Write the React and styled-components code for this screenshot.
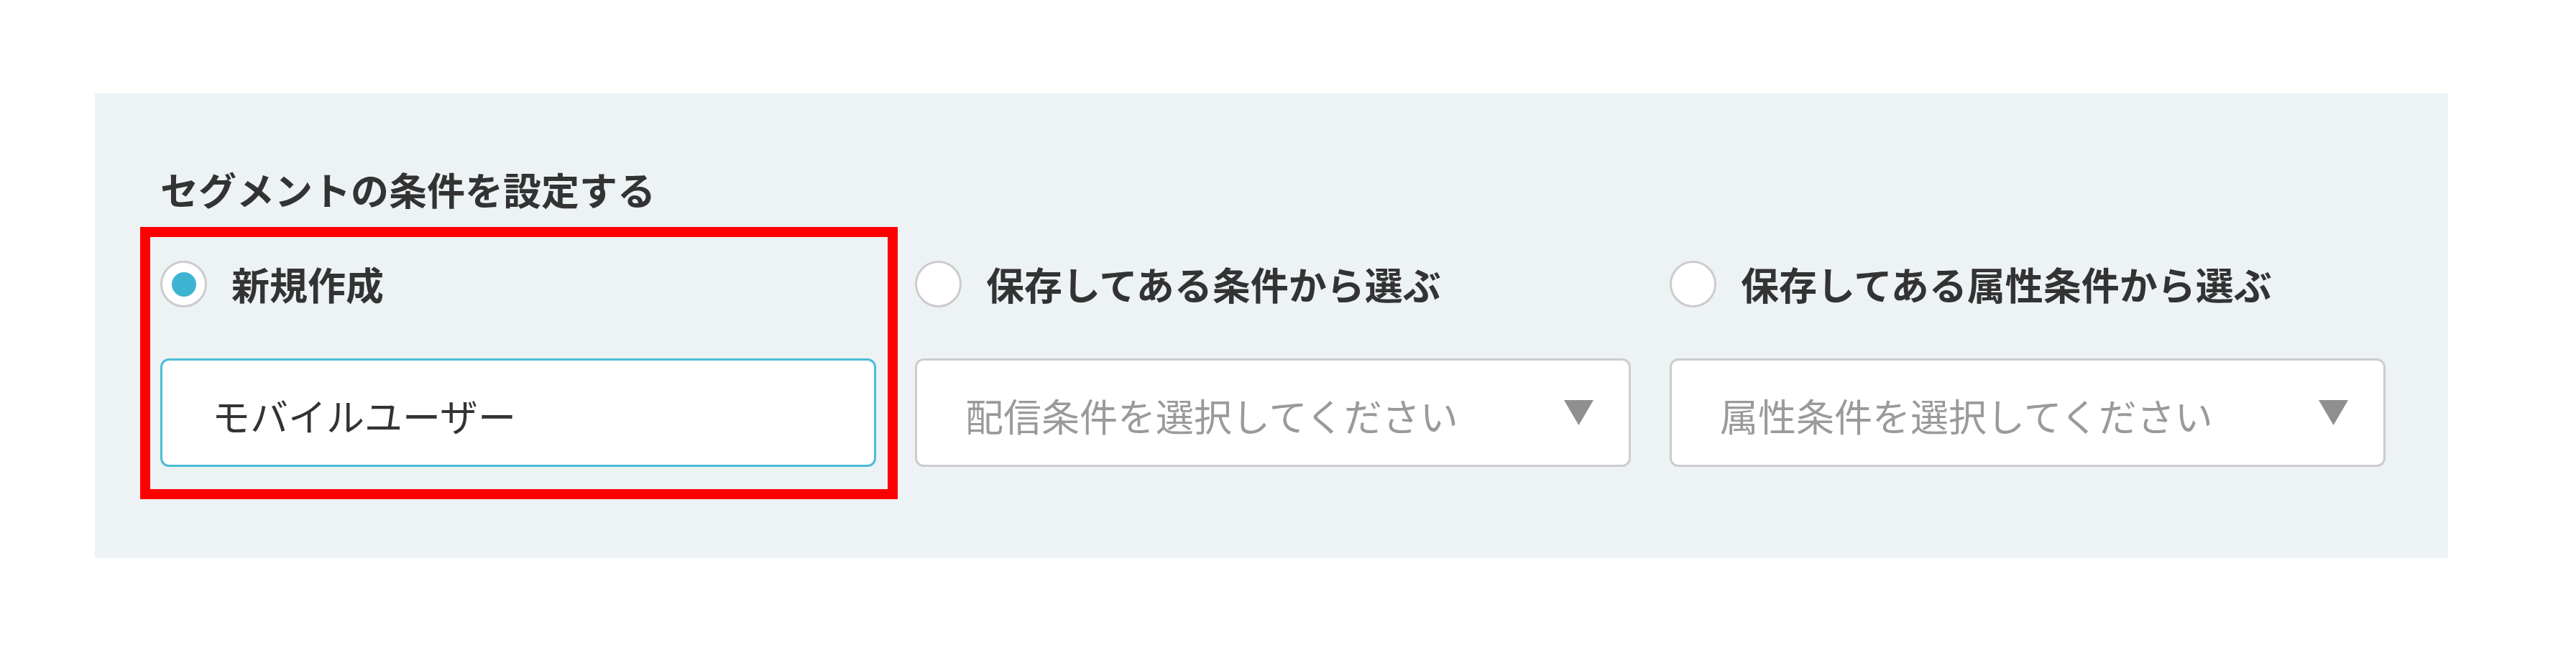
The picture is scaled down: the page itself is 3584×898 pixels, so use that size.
import React, { useState } from "react";
import styled, { createGlobalStyle } from "styled-components";

const GlobalStyle = createGlobalStyle`
  body {
    margin: 0;
    background: #ffffff;
    font-family: "Noto Sans CJK JP", "Noto Sans", sans-serif;
  }
`;

const Page = styled.div`
  padding: 130px 0 0 132px;
`;

const Panel = styled.section`
  width: 3274px;
  box-sizing: border-box;
  background: #edf2f5;
  padding: 95px 87px 127px 91px;
`;

const Heading = styled.h2`
  margin: 0 0 61px 0;
  font-size: 53px;
  line-height: 77px;
  font-weight: 700;
  color: #333333;
`;

const Options = styled.div`
  display: grid;
  grid-template-columns: repeat(3, 1fr);
  column-gap: 54px;
`;

const Option = styled.div`
  position: relative;
  display: flex;
  flex-direction: column;
  gap: 71px;

  ${(p) =>
    p.$highlight &&
    `
    &::after {
      content: "";
      position: absolute;
      top: -47px;
      bottom: -45px;
      left: -28px;
      right: -30px;
      border: 14px solid #ff0000;
      pointer-events: none;
    }
  `}
`;

const RadioRow = styled.label`
  display: flex;
  align-items: center;
  gap: 34px;
  height: 65px;
  cursor: pointer;
`;

const RadioCircle = styled.span`
  flex: none;
  width: 65px;
  height: 65px;
  box-sizing: border-box;
  border-radius: 50%;
  border: 3px solid #cccccc;
  background: #ffffff;
  display: flex;
  align-items: center;
  justify-content: center;

  &::before {
    content: "";
    width: 34px;
    height: 34px;
    border-radius: 50%;
    background: ${(p) => (p.$checked ? "#3db4d2" : "transparent")};
  }
`;

const RadioText = styled.span`
  font-size: 53px;
  line-height: 77px;
  font-weight: 700;
  color: #333333;
  white-space: nowrap;
`;

const TextInput = styled.input`
  width: 100%;
  height: 151px;
  box-sizing: border-box;
  border: 3px solid #4bbcd6;
  border-radius: 12px;
  background: #ffffff;
  padding: 6px 0 0 69px;
  font-family: inherit;
  font-size: 53px;
  color: #333333;
  outline: none;
`;

const SelectBox = styled.div`
  height: 151px;
  box-sizing: border-box;
  border: 3px solid #cccccc;
  border-radius: 12px;
  background: #ffffff;
  padding: 6px 49px 0 67px;
  display: flex;
  align-items: center;
  justify-content: space-between;
`;

const Placeholder = styled.span`
  font-size: 53px;
  color: #9a9a9a;
  white-space: nowrap;
`;

const Arrow = styled.svg`
  flex: none;
  width: 41px;
  height: 35px;
  margin-top: -6px;
`;

const options = [
  { id: "new", label: "新規作成", type: "input" },
  { id: "saved", label: "保存してある条件から選ぶ", placeholder: "配信条件を選択してください" },
  { id: "attr", label: "保存してある属性条件から選ぶ", placeholder: "属性条件を選択してください" },
];

export default function App() {
  const [selected, setSelected] = useState("new");

  return (
    <Page>
      <GlobalStyle />
      <Panel>
        <Heading>セグメントの条件を設定する</Heading>
        <Options>
          {options.map((o) => (
            <Option key={o.id} $highlight={o.id === "new"}>
              <RadioRow onClick={() => setSelected(o.id)}>
                <RadioCircle $checked={selected === o.id} />
                <RadioText>{o.label}</RadioText>
              </RadioRow>
              {o.type === "input" ? (
                <TextInput defaultValue="モバイルユーザー" />
              ) : (
                <SelectBox>
                  <Placeholder>{o.placeholder}</Placeholder>
                  <Arrow viewBox="0 0 41 35">
                    <polygon points="0,0 41,0 20.5,35" fill="#8f8f8f" />
                  </Arrow>
                </SelectBox>
              )}
            </Option>
          ))}
        </Options>
      </Panel>
    </Page>
  );
}
